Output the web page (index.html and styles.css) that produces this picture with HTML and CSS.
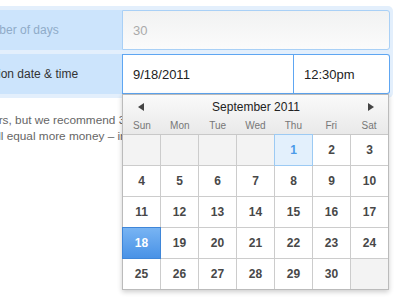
FILE: index.html
```html
<!DOCTYPE html>
<html lang="en">
<head>
    <meta charset="UTF-8">
    <title>Listing duration</title>
    <link rel="stylesheet" href="styles.css">
</head>
<body>
    <!-- duration fields -->
    <div class="field-box">
        <div class="field-row">
            <div class="field-label muted">Number of days</div>
            <div class="field-input disabled">30</div>
        </div>
        <div class="field-row">
            <div class="field-label">Auction date &amp; time</div>
            <div class="field-input focus date">9/18/2011</div>
            <div class="field-input focus time">12:30pm</div>
        </div>
    </div>

    <p class="hint">
        <span class="hint-line first">hours, but we recommend 3 days since longer listings</span>
        <span class="hint-line second">will equal more money – in most cases.</span>
    </p>

    <!-- date picker popup -->
    <div class="datepicker">
        <div class="dp-head">
            <div class="dp-nav">
                <svg width="6" height="8" viewBox="0 0 6 8"><path d="M6 0 L0 4 L6 8 Z" fill="#444"/></svg>
                <span class="dp-month">September 2011</span>
                <svg width="6" height="8" viewBox="0 0 6 8"><path d="M0 0 L6 4 L0 8 Z" fill="#444"/></svg>
            </div>
            <div class="dp-days">
                <span>Sun</span><span>Mon</span><span>Tue</span><span>Wed</span><span>Thu</span><span>Fri</span><span>Sat</span>
            </div>
        </div>
        <div class="dp-grid" id="grid"></div>
    </div>

    <script>
        // September 2011 starts on a Thursday
        const grid = document.getElementById('grid');
        let cells = '';
        for (let i = 0; i < 35; i++) {
            const day = i - 3;
            if (day < 1 || day > 30) {
                cells += '<div class="dp-cell empty"></div>';
            } else if (day === 1) {
                cells += '<div class="dp-cell today">' + day + '</div>';
            } else if (day === 18) {
                cells += '<div class="dp-cell selected">' + day + '</div>';
            } else {
                cells += '<div class="dp-cell">' + day + '</div>';
            }
        }
        grid.innerHTML = cells;
    </script>
</body>
</html>
```

FILE: styles.css
```css
body {
    margin: 0;
    padding-top: 6px;
    font-family: 'Liberation Sans', Arial, sans-serif;
    background: #fff;
    overflow: hidden;
    position: relative;
    width: 400px;
    height: 300px;
}

/* 字段区域 */
.field-box {
    background: #e3effc;
    margin: 0 7px 0 -40px;
    padding: 4px 3px 4px 4px;
    border-radius: 0 5px 5px 0;
    display: flex;
    flex-direction: column;
    gap: 4px;
}

.field-row {
    display: flex;
    height: 40px;
}

.field-label {
    width: 158px;
    flex-shrink: 0;
    background: #cce4fc;
    padding-left: 10px;
    box-sizing: border-box;
    display: flex;
    align-items: center;
    font-size: 12px;
    color: #333;
    white-space: nowrap;
}

.field-label.muted {
    color: #8fabc8;
}

.field-input {
    flex: 1;
    box-sizing: border-box;
    display: flex;
    align-items: center;
    padding-left: 10px;
    font-size: 13px;
    color: #222;
    background: #fff;
}

.field-input.disabled {
    border: 1px solid #a9d0f6;
    border-radius: 0 3px 3px 0;
    background: linear-gradient(#f1f2f2, #fbfbfb);
    color: #aaa;
}

.field-input.focus {
    border: 1px solid #5ea6f2;
}

.field-input.date {
    flex: 0 0 172px;
}

.field-input.time {
    border-left: none;
    border-radius: 0 3px 3px 0;
}

/* 提示文字 */
.hint {
    margin: 14px 0 0 0;
    font-size: 11.8px;
    line-height: 16px;
    color: #666;
}

.hint-line {
    display: block;
    white-space: nowrap;
}

.hint-line.first {
    margin-left: -21px;
}

.hint-line.second {
    margin-left: -13px;
}

/* 日期选择器 */
.datepicker {
    position: absolute;
    left: 122px;
    top: 94px;
    width: 267px;
    background: #fff;
    border: 1px solid #bbb;
    box-sizing: border-box;
    box-shadow: 0 2px 5px rgba(0,0,0,0.2);
}

.dp-head {
    height: 40px;
    background: linear-gradient(#fafafa, #e9e9e9);
    border-bottom: 1px solid #c8c8c8;
    box-sizing: border-box;
}

.dp-nav {
    display: flex;
    align-items: center;
    justify-content: space-between;
    height: 24px;
    padding: 0 14px 0 15px;
}

.dp-month {
    font-size: 12px;
    color: #222;
}

.dp-days {
    display: grid;
    grid-template-columns: repeat(7, 1fr);
    font-size: 10px;
    line-height: 14px;
    color: #777;
    text-align: center;
}

.dp-grid {
    display: grid;
    grid-template-columns: repeat(7, 37px);
    grid-auto-rows: 30px;
    gap: 1px;
    background: #ccc;
}

.dp-cell {
    background: #fff;
    display: flex;
    align-items: center;
    justify-content: center;
    font-size: 12px;
    font-weight: bold;
    color: #484848;
}

.dp-cell.empty {
    background: #f3f3f3;
}

.dp-cell.today {
    background: #e3f0fc;
    color: #4b9be9;
    box-shadow: 0 0 0 1px #9ccaf3;
    position: relative;
}

.dp-cell.selected {
    background: linear-gradient(#78b4f3, #4992e6);
    color: #fff;
    box-shadow: 0 0 0 1px #3f86d8;
    position: relative;
}
```
